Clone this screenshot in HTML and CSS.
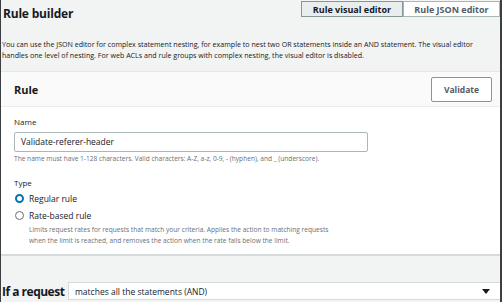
FILE: index.html
```html
<!DOCTYPE html>
<html>
<head>
<meta charset="utf-8">
<link rel="stylesheet" href="styles.css">
</head>
<body>
<div class="frame">
  <div class="builder-head">
    <h2 class="title">Rule builder</h2>
    <div class="seg">
      <span class="seg-btn active">Rule visual editor</span>
      <span class="seg-btn">Rule JSON editor</span>
    </div>
  </div>
  <p class="desc">You can use the JSON editor for complex statement nesting, for example to nest two OR statements inside an AND statement. The visual editor handles one level of nesting. For web ACLs and rule groups with complex nesting, the visual editor is disabled.</p>

  <section class="card">
    <div class="card-head">
      <h3 class="card-title">Rule</h3>
      <button class="btn">Validate</button>
    </div>
    <div class="card-body">
      <label class="label">Name</label>
      <div class="input">Validate-referer-header</div>
      <p class="hint">The name must have 1-128 characters. Valid characters: A-Z, a-z, 0-9, - (hyphen), and _ (underscore).</p>

      <div class="label type-label">Type</div>
      <div class="radio-row">
        <span class="radio checked"></span>
        <span class="radio-text">Regular rule</span>
      </div>
      <div class="radio-row">
        <span class="radio"></span>
        <span class="radio-text">Rate-based rule</span>
      </div>
      <p class="radio-desc">Limits request rates for requests that match your criteria. Applies the action to matching requests when the limit is reached, and removes the action when the rate falls below the limit.</p>
    </div>
  </section>

  <div class="if-row">
    <span class="if-label">If a request</span>
    <div class="select">
      <span>matches all the statements (AND)</span>
      <span class="caret"></span>
    </div>
  </div>
</div>
</body>
</html>
```

FILE: styles.css
```css
* { box-sizing: border-box; }
html, body { margin: 0; padding: 0; }
body {
  width: 502px;
  height: 302px;
  overflow: hidden;
  background: #f2f3f3;
  font-family: "Open Sans", "Noto Sans", sans-serif;
  color: #16191f;
}
.frame {
  height: 302px;
  border-left: 1px solid #3b3f44;
  border-right: 2px solid #3b3f44;
  overflow: hidden;
}
.builder-head {
  display: flex;
  justify-content: space-between;
  align-items: flex-start;
  height: 34px;
}
.title {
  margin: 5px 0 0 2px;
  font-size: 12px;
  font-weight: 700;
  letter-spacing: -0.2px;
}
.seg {
  display: flex;
  margin-top: 1px;
}
.seg-btn {
  display: flex;
  align-items: center;
  justify-content: center;
  height: 16px;
  font-size: 9px;
  font-weight: 700;
  border: 1px solid #aab7b8;
  background: #fff;
  color: #545b64;
  width: 97px;
}
.seg-btn.active {
  background: #eaeded;
  color: #16191f;
  border-color: #879596;
  width: 102px;
}
.desc {
  margin: 5px 0 0 1px;
  width: 496px;
  font-size: 7.1px;
  line-height: 11px;
  color: #16191f;
}
.card {
  margin-top: 10px;
  background: #fff;
  border-top: 1px solid #e4e7e7;
  border-bottom: 2px solid #d5dbdb;
}
.card-head {
  display: flex;
  justify-content: space-between;
  align-items: center;
  height: 35px;
  padding: 0 8px 0 13px;
  background: #fafafa;
  border-bottom: 1px solid #eaeded;
}
.card-title {
  margin: 0;
  font-size: 11px;
  font-weight: 700;
}
.btn {
  width: 61px;
  height: 25px;
  background: #fff;
  border: 1px solid #879596;
  border-radius: 2px;
  font-family: inherit;
  font-size: 8.5px;
  font-weight: 700;
  color: #545b64;
  padding: 0;
}
.card-body {
  padding: 9px 13px 8px 13px;
}
.label {
  display: block;
  font-size: 8px;
  line-height: 12px;
  color: #16191f;
}
.input {
  margin-top: 4px;
  width: 354px;
  height: 20px;
  border: 1px solid #aab7b8;
  border-radius: 2px;
  padding: 0 6px;
  font-size: 8.5px;
  line-height: 18px;
}
.hint {
  margin: 2px 0 0 0;
  font-size: 6.6px;
  line-height: 10px;
  color: #687078;
}
.type-label {
  margin-top: 13px;
}
.radio-row {
  display: flex;
  align-items: center;
  gap: 5px;
  height: 16px;
  margin-top: 1px;
  margin-left: 1px;
}
.radio {
  width: 9px;
  height: 9px;
  border-radius: 50%;
  border: 1px solid #687078;
  background: #fff;
  flex: none;
}
.radio.checked {
  border: 2.7px solid #0073bb;
}
.radio-text {
  font-size: 8.5px;
}
.radio-desc {
  margin: 1px 0 0 15px;
  font-size: 6.6px;
  line-height: 11px;
  color: #687078;
  width: 300px;
}
.if-row {
  display: flex;
  align-items: center;
  height: 18px;
  margin-top: 26px;
}
.if-label {
  font-size: 12px;
  font-weight: 700;
  white-space: nowrap;
  width: 67px;
  padding-left: 1px;
  letter-spacing: -0.5px;
}
.select {
  flex: 1;
  display: flex;
  justify-content: space-between;
  align-items: center;
  height: 18px;
  background: #fff;
  border: 1px solid #d5dbdb;
  border-right: none;
  padding: 0 10px 0 6px;
  font-size: 8.5px;
}
.caret {
  width: 0;
  height: 0;
  border-left: 4px solid transparent;
  border-right: 4px solid transparent;
  border-top: 5px solid #16191f;
}
```
